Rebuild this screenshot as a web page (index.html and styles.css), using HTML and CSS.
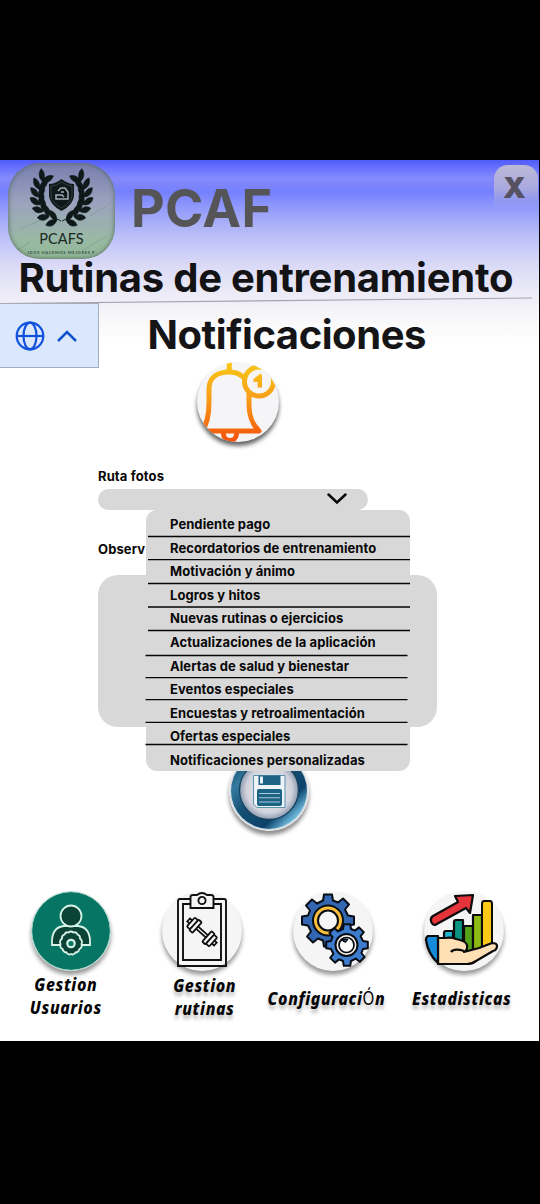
FILE: index.html
```html
<!DOCTYPE html>
<html lang="es">
<head>
<meta charset="utf-8">
<title>PCAF</title>
<link rel="stylesheet" href="styles.css">
</head>
<body>
<div class="screen">
  <header class="header">
    <div class="brand-row">
      <div class="logo">
        <svg width="107" height="97" viewBox="0 0 107 97">
          <defs>
            <g id="leaf"><path d="M0 1C-7 0-9-4-9-9C-4-9 0-5 0 1ZM0 1C6-1 8-5 7-11C2-9-1-5 0 1Z"/></g>
            <g id="laurel" fill="#10191a" stroke="#10191a" stroke-width=".7">
              <path d="M34 14C24 29 25 48 53 60" fill="none" stroke-width="1"/>
              <use href="#leaf" transform="translate(32 18) rotate(35)"/>
              <use href="#leaf" transform="translate(28 26) rotate(14)"/>
              <use href="#leaf" transform="translate(27 34) rotate(-2)"/>
              <use href="#leaf" transform="translate(28 42) rotate(-16)"/>
              <use href="#leaf" transform="translate(32 49) rotate(-34)"/>
              <use href="#leaf" transform="translate(38 55) rotate(-52)"/>
              <use href="#leaf" transform="translate(47 59) rotate(-70)"/>
            </g>
          </defs>
          <path d="M3 91L22 79M75 87L99 73M13 66L35 56M82 53L103 40" stroke="#71887f" stroke-width="1" opacity=".4"/>
          <g transform="translate(7.500 .5) scale(.86 .96)">
            <use href="#laurel"/>
            <use href="#laurel" transform="translate(107 0) scale(-1 1)"/>
          </g>
          <path d="M53.500 16Q60 21 66 21V33Q65 42 53.500 48Q42 42 41 33V21Q47 21 53.500 16Z" fill="#10191a"/>
          <path d="M53.500 19Q59 23 64 23V33Q63 40 53.500 45Q44 40 43 33V23Q48 23 53.500 19Z" fill="none" stroke="#59656a" stroke-width=".5"/>
          <path d="M50 28L53 25H57L60 29V36H48V32H54L56 34M53 29H56" fill="none" stroke="#a4abbb" stroke-width="1.500"/>
        </svg>
        <span class="logo-name">PCAFS</span>
        <span class="logo-motto">IDOS HACEMOS MEJORES P</span>
      </div>
      <div class="app-name">PCAF</div>
      <button class="close">X</button>
    </div>
    <h1 class="title">Rutinas de entrenamiento</h1>
    <svg class="rule" width="532" height="8" viewBox="0 0 532 8"><path d="M0 6.500L532 1" stroke="#a5a4ae" stroke-width="1.200"/></svg>
  </header>

  <div class="sub-row">
    <div class="language">
      <svg width="30" height="30" viewBox="0 0 30 30" fill="none" stroke="#1052dd" stroke-width="2.200"><circle cx="15" cy="15" r="13.300"/><ellipse cx="15" cy="15" rx="6.500" ry="13.300"/><path d="M1.700 15H28.300"/></svg>
      <svg width="20" height="12" viewBox="0 0 20 12" fill="none" stroke="#1052c8" stroke-width="2.500"><path d="M1 11L10 2L19 11"/></svg>
    </div>
    <h2 class="subtitle">Notificaciones</h2>
  </div>

  <div class="bell">
    <svg width="82" height="80" viewBox="0 0 82 80">
      <defs>
        <linearGradient id="sun" x1="0" y1="0" x2="0" y2="80" gradientUnits="userSpaceOnUse"><stop offset="0" stop-color="#f8c816"/><stop offset=".45" stop-color="#f89e18"/><stop offset="1" stop-color="#f5510c"/></linearGradient>
        <clipPath id="disc"><ellipse cx="41" cy="40" rx="41" ry="40"/></clipPath>
      </defs>
      <g clip-path="url(#disc)" fill="none" stroke="url(#sun)" stroke-width="5">
        <path d="M5 69Q12 60 12 40V27C12 15 21 10 32 10S52 17 52 28V42C52 56 56 63 62 69Z" stroke-linejoin="round"/>
        <path d="M29.800 0H34.800V10H29.800Z" fill="url(#sun)" stroke="none"/>
        <path d="M26.500 69V72A6.500 6.500 0 0 0 39.500 72V69"/>
        <circle cx="62" cy="19.500" r="14.500" fill="#f5f5f7"/>
        <path d="M63.500 11.500Q65 12 65 14V25.500H60.500V20H56.500V17Z" fill="url(#sun)" stroke="none"/>
      </g>
    </svg>
  </div>

  <main class="form">
    <label class="label">Ruta fotos</label>
    <div class="select">
      <svg width="20" height="12" viewBox="0 0 20 12" fill="none" stroke="#080808" stroke-width="2.500" stroke-linecap="round"><path d="M1.500 1.500L10 9.500L18.500 1.500"/></svg>
      <div class="menu">
        <div class="option">Pendiente pago</div>
        <div class="option">Recordatorios de entrenamiento</div>
        <div class="option">Motivación y ánimo</div>
        <div class="option">Logros y hitos</div>
        <div class="option">Nuevas rutinas o ejercicios</div>
        <div class="option">Actualizaciones de la aplicación</div>
        <div class="option">Alertas de salud y bienestar</div>
        <div class="option">Eventos especiales</div>
        <div class="option">Encuestas y retroalimentación</div>
        <div class="option">Ofertas especiales</div>
        <div class="option">Notificaciones personalizadas</div>
        <svg class="dividers" width="265" height="261" viewBox="0 0 265 261" stroke="#050505" stroke-width="1.300"><path d="M2 26.500H264M2 49.700H264M2 73.500H264M2 97H264M2 120.500H264M-.5 145.500H261.500M-.5 167.700H261.500M-.5 189.700H261.500M-.5 212.400H261.500M-.5 234.500H261.500"/></svg>
      </div>
    </div>
    <label class="label">Observ</label>
    <div class="textarea"></div>
  </main>

  <button class="save">
    <svg width="80" height="80" viewBox="0 0 80 80">
      <defs>
        <linearGradient id="ring" x1="0" y1="0" x2="1" y2="1"><stop offset="0" stop-color="#0c3652"/><stop offset=".25" stop-color="#347a9e"/><stop offset=".45" stop-color="#154f73"/><stop offset=".7" stop-color="#0c426a"/><stop offset=".84" stop-color="#6bb8da"/><stop offset="1" stop-color="#13557b"/></linearGradient>
        <radialGradient id="plate"><stop offset="0" stop-color="#f6f6f9"/><stop offset=".78" stop-color="#cfd1dc"/><stop offset="1" stop-color="#8c9baf"/></radialGradient>
      </defs>
      <circle cx="40" cy="40" r="39.500" fill="#d4dde3"/>
      <circle cx="40" cy="40" r="38" fill="url(#ring)"/>
      <circle cx="40" cy="39" r="29.500" fill="url(#plate)" stroke="#17425f" stroke-width="1.300"/>
      <path d="M24.500 24.500H56V56.500H28L24.500 53Z" fill="#edf3f7" stroke="#5a93ae"/>
      <path d="M29.500 24.500H51.500V34H29.500Z" fill="#1d6386"/><path d="M31 25.500H34V32.500H31Z" fill="#e9f2f6"/>
      <rect x="28" y="38" width="25" height="17" rx="2" fill="#1d6386"/>
      <path d="M30 42.500H51M30 46.800H51M30 51H51" stroke="#a9cad8" stroke-width="1.100"/>
    </svg>
  </button>

  <nav class="nav">
    <a class="tab users">
      <span class="disc">
        <svg width="80" height="80" viewBox="0 0 80 80" stroke="#d7f2e7" stroke-width="1.800">
          <circle cx="40" cy="40" r="39.300" fill="#067564" stroke="#a8d6ca" stroke-width="1"/>
          <path d="M21 54V49Q22 36 33 35H47Q58 36 59 49V54Z" fill="#0b4437"/>
          <circle cx="40" cy="25" r="10.500" fill="#0b4437"/>
          <g fill="#0b4437"><path d="M37.600 41.500Q40 39.500 42.400 41.500Q45.500 40.500 46.500 43.500Q49.500 44.500 49 47.500Q52 50 50.500 53Q51.500 56.500 48.500 58Q47.500 61.500 44.500 61.500Q42.500 64.500 40 63Q37.500 64.500 35.500 61.500Q32.500 61.500 31.500 58Q28.500 56.500 29.500 53Q28 50 31 47.500Q30.500 44.500 33.500 43.500Q34.500 40.500 37.600 41.500Z"/></g>
          <circle cx="40" cy="52.500" r="3.700" fill="#067564" stroke-width="2.200"/>
        </svg>
      </span>
      <span class="tab-label"><span>Gestion</span><span>Usuarios</span></span>
    </a>
    <a class="tab routines">
      <span class="disc">
        <svg width="80" height="80" viewBox="0 0 80 80" fill="none" stroke="#101010" stroke-width="1.900">
          <path d="M16 75V10Q16 8 18 8H62Q64 8 64 10V75ZM21 13H59V69H21Z"/>
          <path d="M28.500 17V6Q28.500 4 31 4H35Q40 0 45 4H49Q51.500 4 51.500 6V17Z" fill="#f5f5f5"/><circle cx="40" cy="9.500" r="3.600"/>
          <g transform="translate(40 41) rotate(42)" fill="#f5f5f5" stroke-width="1.800"><path d="M-18-2H-14V2H-18ZM14-2H18V2H14Z"/><path d="M-8-1.500H8V1.500H-8Z"/><rect x="-15" y="-6" width="4.200" height="12" rx="1"/><rect x="-10.800" y="-7" width="4.200" height="14" rx="1"/><rect x="6.600" y="-7" width="4.200" height="14" rx="1"/><rect x="10.800" y="-6" width="4.200" height="12" rx="1"/></g>
        </svg>
      </span>
      <span class="tab-label soft"><span>Gestion</span><span>rutinas</span></span>
    </a>
    <a class="tab settings">
      <span class="disc">
        <svg width="80" height="80" viewBox="0 0 80 80" stroke="#080c14" stroke-width="2" stroke-linejoin="round">
          <defs><path id="cog" d="M-5-20L-4-26H4L5-20L10-18L15-22L21-16L17-11L20-5L26-4V4L20 5L18 10L22 15L16 21L11 17L5 20L4 26H-4L-5 20L-10 18L-15 22L-21 16L-17 11L-20 5L-26 4V-4L-20-5L-18-10L-22-15L-16-21L-11-17Z"/></defs>
          <use href="#cog" transform="translate(35 29.500)" fill="#3467b1"/>
          <circle cx="35" cy="29.500" r="15" fill="#f9bd3c"/><circle cx="35" cy="29.500" r="10" fill="#f5f5f5"/>
          <use href="#cog" transform="translate(54 54) scale(.8)" fill="#3e7dce" stroke-width="2.500"/>
          <circle cx="53.500" cy="54" r="11" fill="#f5efe6"/><circle cx="53.500" cy="54" r="7.500" fill="#fff" stroke-width="1.700"/>
          <path d="M48 50Q50.500 47.500 54.500 48.500L52.500 51L50 50" fill="#3467b1" stroke-width="1.400"/>
        </svg>
      </span>
      <span class="tab-label soft"><span>Configuraci<i class="accent">Ó</i>n</span></span>
    </a>
    <a class="tab stats">
      <span class="disc">
        <svg width="80" height="80" viewBox="0 0 80 80" stroke="#0b0b0b" stroke-width="2.200" stroke-linejoin="round">
          <path d="M7 30Q6 27 9 25L34 11L31 5L49 4L46 22L42 17L11 34Q8 34 7 30Z" fill="#e6353a"/>
          <path d="M20 60V42Q20 40 22 40H29V60Z" fill="#22b5cf"/><path d="M30 60V31Q30 29 32 29H39V60Z" fill="#099380"/>
          <path d="M40 62V35H49V62Z" fill="#55a317"/><path d="M49 62V24H58V62Z" fill="#8eb914"/><path d="M58 62V13Q58 10 60 10H66Q68 10 68 13V58Z" fill="#fcc916" stroke-width="2"/>
          <path d="M14 47H21Q28 46 32 48Q42 50 43 54Q44 59 40 61L55 57L68 52Q73 52 73 55Q73 59 69 60L52 70Q48 73 43 73H14Z" fill="#ffe0b5"/>
          <path d="M27 61Q30 57 40 60" fill="none"/>
          <path d="M14 72V45H4Q2 46 2 49Q4 63 14 72Z" fill="#168bda"/>
        </svg>
      </span>
      <span class="tab-label soft"><span>Estadisticas</span></span>
    </a>
  </nav>
</div>
</body>
</html>
```
FILE: styles.css
```css
* { box-sizing: border-box; }
body { margin: 0; padding: 160px 1px 163px 0; height: 1204px; background: #000; font-family: Inter, "Liberation Sans", sans-serif; overflow: hidden; }
h1, h2 { margin: 0; font-weight: 700; white-space: nowrap; }
svg { display: block; flex: none; }
button { padding: 0; border: 0; background: none; font: inherit; }
.screen { width: 539px; height: 881px; display: flex; flex-direction: column; background: linear-gradient(#505cf9 0, #6971ff 8px, #858bfa 18px, #8086fb 23px, #7480fe 32px, #929afb 48px, #aab0f7 64px, #c6c9f8 86px, #dadaf7 105px, #e7e6f7 125px, #f2f1f7 145px, #fafafa 165px, #fff 187px); overflow: hidden; }

.header { height: 143px; display: flex; flex-direction: column; }
.brand-row { display: flex; height: 98px; padding-left: 8px; }
.logo { position: relative; width: 107px; height: 96px; margin-top: 3px; border-radius: 32px; background: linear-gradient(#777eb0, #9ba4bd 43%, #9ab8a6 78%, #91b996); box-shadow: inset 0 0 5px #53655a; overflow: hidden; }
.logo-name { position: absolute; top: 67px; left: 0; width: 107px; text-align: center; font: 14.500px/18px Lato, sans-serif; letter-spacing: .1px; color: #182822; }
.logo-motto { position: absolute; top: 87px; left: 13px; width: 81px; text-align: center; white-space: nowrap; font: 900 4px/6px Lato, sans-serif; letter-spacing: .65px; color: #3f574c; }
.app-name { flex: 1; margin: 19px 0 0 16px; font-size: 52px; line-height: 60px; font-weight: 700; letter-spacing: .3px; color: #555558; }
.close { width: 44px; height: 44px; margin: 5px 1px 0 0; padding-right: 3px; border-radius: 14px 14px 0 0; background: linear-gradient(#bdb9d5, #a9a8e0 55%, transparent); font: 900 29px/46px Inter, sans-serif; color: #555361; }
.title { margin: 0 0 0 18.500px; font-size: 40px; line-height: 40px; letter-spacing: -.25px; color: #131316; }
.rule { margin-top: -1px; }

.sub-row { display: flex; height: 65px; }
.language { width: 99px; height: 65px; padding-left: 15px; display: flex; align-items: center; gap: 12px; border: solid #a5adba; border-width: 1px 1px 1px 0; background: #dbe7fd; }
.subtitle { margin: 9px 0 0 48.500px; font-size: 40px; line-height: 46px; letter-spacing: -.45px; color: #151517; }
.bell { width: 82px; height: 80px; margin: -6px 0 0 197px; border-radius: 50%; background: #f5f5f7; box-shadow: 0 4px 4px #0009; flex: none; }

.form { display: flex; flex-direction: column; margin: 25px 0 0 98px; width: 340px; height: 260px; flex: none; }
.label { height: 18px; font-size: 13px; line-height: 18px; font-weight: 700; letter-spacing: .12px; color: #080808; }
.select { position: relative; width: 270px; height: 21px; margin: 4px 0 30px; padding: 4px 21px 0 0; border-radius: 11px; background: #d8d8d8; display: flex; justify-content: flex-end; align-items: flex-start; }
.textarea { width: 339px; height: 152px; margin-top: 17px; border-radius: 20px; background: #d8d8d8; flex: none; }
.menu { position: absolute; top: 21px; left: 47.500px; width: 264.500px; height: 261px; padding: 3px 0 0 24.500px; border-radius: 11px; background: #d8d8d8; z-index: 1; }
.option { height: 23.600px; font-size: 13px; line-height: 23.600px; font-weight: 700; letter-spacing: .07px; color: #080808; white-space: nowrap; }
.dividers { position: absolute; top: 0; left: 0; overflow: visible; }
.save { width: 80px; height: 80px; margin: 24px 0 0 229px; border-radius: 50%; box-shadow: 0 4px 4px #0007; flex: none; }

.nav { display: flex; padding-left: 31px; margin-top: 60px; gap: 51px; }
.tab { display: flex; flex-direction: column; align-items: center; width: 80px; flex: none; }
.disc { width: 80px; height: 80px; border-radius: 50%; background: #f5f5f5; box-shadow: 0 4px 4px #0006; }
.tab-label { display: flex; flex-direction: column; align-items: center; white-space: nowrap; font: italic 800 18.500px/23px "Noto Sans", sans-serif; letter-spacing: .7px; color: #050505; transform: scaleX(.86); }
.soft { text-shadow: 0 4px 4px #0004; }
.users .tab-label { margin: 1px 11px 0 0; }
.routines .tab-label { margin: 2px 0 0 5px; }
.settings .tab-label { margin: 15px 0 0 -13px; }
.stats .tab-label { margin: 15px 0 0 -5px; }
.accent { font: 400 18px/20px Inter, sans-serif; }
```
